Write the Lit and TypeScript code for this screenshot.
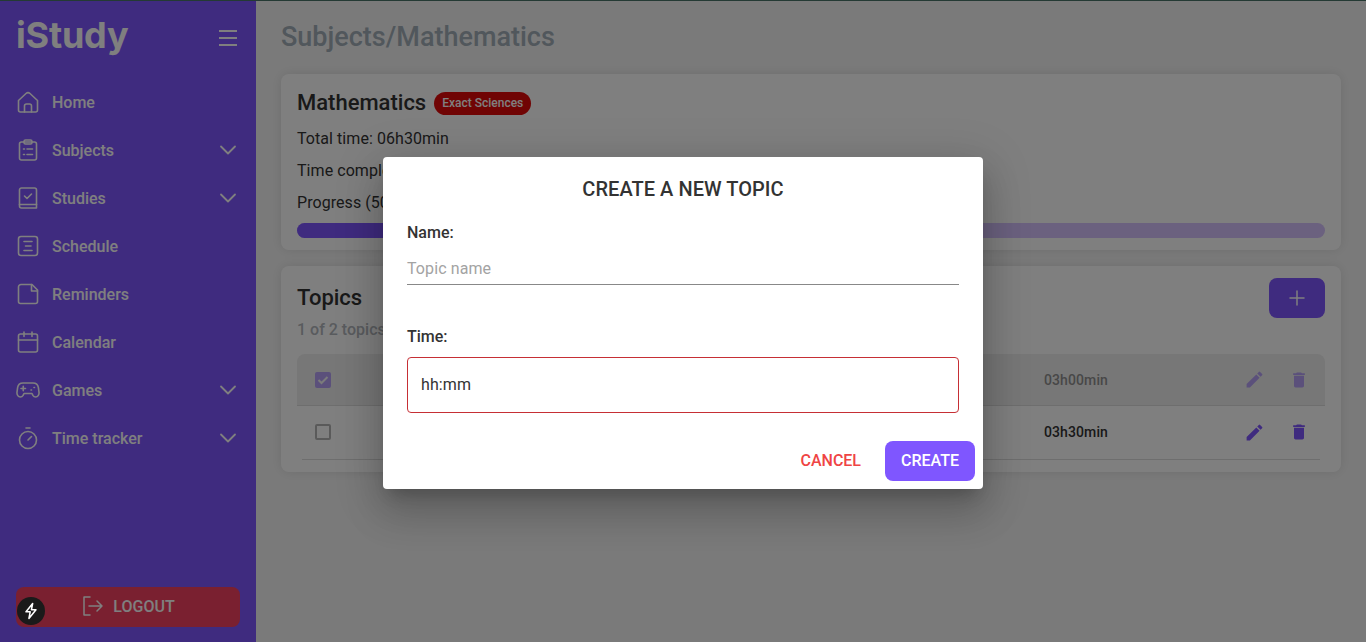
import { LitElement, html, css, svg } from 'lit'
import { customElement } from 'lit/decorators.js'

const icons = {
  home: svg`<path d="M2.500 10.500 10 3.500a3 3 0 0 1 4 0l7.500 7V20a2 2 0 0 1-2 2h-15a2 2 0 0 1-2-2z"/><path d="M8.500 22v-6a2 2 0 0 1 2-2h3a2 2 0 0 1 2 2v6"/>`,
  subjects: svg`<rect x="3.500" y="4" width="17" height="18" rx="2"/><rect x="8" y="2" width="8" height="4" rx="1.500"/><path d="M7.500 11h1M11 11h5.500M7.500 16.500h1M11 16.500h5.500"/>`,
  studies: svg`<path d="M5.500 2h13a2 2 0 0 1 2 2v18h-15a2 2 0 0 1-2-2V4a2 2 0 0 1 2-2z"/><path d="M3.500 18.500h17"/><path d="m8.500 10 2.500 2.500L15.500 8"/>`,
  schedule: svg`<rect x="2.500" y="2.500" width="19" height="19" rx="2.500"/><path d="M8 7.500h8M9.500 12H15M8 16.500h8"/>`,
  reminders: svg`<path d="M5 2.500h11L21.500 8v11.500a2 2 0 0 1-2 2H4.500a2 2 0 0 1-2-2V5a2.500 2.500 0 0 1 2.500-2.500z"/><path d="M15.500 2.500V9h6"/>`,
  calendar: svg`<rect x="2.500" y="4" width="19" height="18" rx="2"/><path d="M2.500 10h19M8 2v4.500M16 2v4.500"/>`,
  games: svg`<path d="M7 5h10a5.500 5.500 0 0 1 5.400 4.600l.6 4.800c.3 2.400-1.300 4.600-3.300 4.600-1.200 0-2.200-.6-2.800-1.600L16 15.500H8l-.9 1.900C6.500 18.400 5.500 19 4.300 19c-2 0-3.600-2.200-3.300-4.600l.6-4.800A5.500 5.500 0 0 1 7 5z"/><path d="M5 10.500h4.500M7.250 8.250v4.500M15 12h.5M18 9.500h.5"/>`,
  timer: svg`<circle cx="12" cy="14" r="8.500"/><path d="M10 2h4M12 14l3.500-3.500"/>`
}

const nav = [
  { label: 'Home', icon: icons.home },
  { label: 'Subjects', icon: icons.subjects, more: true },
  { label: 'Studies', icon: icons.studies, more: true },
  { label: 'Schedule', icon: icons.schedule },
  { label: 'Reminders', icon: icons.reminders },
  { label: 'Calendar', icon: icons.calendar },
  { label: 'Games', icon: icons.games, more: true },
  { label: 'Time tracker', icon: icons.timer, more: true }
]

const pencil = html`<svg class="act pencil" viewBox="0 0 24 24"><path d="M3 17.250V21h3.750L17.810 9.940l-3.750-3.750zM20.710 7.040a1 1 0 0 0 0-1.410l-2.340-2.340a1 1 0 0 0-1.410 0l-1.830 1.830 3.750 3.750z"/></svg>`
const trash = html`<svg class="act" viewBox="0 0 24 24"><path d="M6 19c0 1.100.9 2 2 2h8c1.100 0 2-.9 2-2V7H6zM19 4h-3.500l-1-1h-5l-1 1H5v2h14z"/></svg>`

@customElement('app-root')
export class AppRoot extends LitElement {
  static styles = [
    css`
      * {box-sizing: border-box}

      :host {
        display: flex;
        height: 642px;
        overflow: hidden;
        position: relative;
        font-family: Roboto, sans-serif;
        font-size: 16px;
        color: #333;
        background: #f5f5f5;
      }

      .sidebar {
        width: 256px;
        flex: none;
        display: flex;
        flex-direction: column;
        padding: 0 16px 15px;
        background: #7f56ff;
        color: #fff;
      }

      .brand {
        height: 78px;
        display: flex;
        align-items: center;
        justify-content: space-between;
        padding-bottom: 8px;
      }

      .logo {
        font-family: Inter, sans-serif;
        font-size: 36px;
        font-weight: 700;
        letter-spacing: -.2px;
        line-height: 1;
      }

      .burger {
        width: 18px;
        margin-right: 3px;
        display: flex;
        flex-direction: column;
        gap: 5.500px;
        margin-top: 6px;
      }

      .burger i {
        height: 1.500px;
        background: #fff;
      }

      .nav {
        flex: 1;
      }

      .item {
        height: 48px;
        display: flex;
        align-items: center;
        gap: 12px;
        font-weight: 500;
      }

      .item svg {
        fill: none;
        stroke: #fff;
        stroke-width: 1.600;
        stroke-linecap: round;
        stroke-linejoin: round;
      }

      .item .icon {
        width: 24px;
        height: 24px;
      }

      .item span {
        flex: 1;
      }

      .item .chev {
        width: 24px;
        height: 24px;
        stroke-width: 1.800;
      }

      .logout {
        height: 40px;
        padding-bottom: 2px;
        border-radius: 8px;
        background: #f54060;
        display: flex;
        align-items: center;
        justify-content: center;
        gap: 8px;
        font-weight: 500;
      }

      .logout svg {
        width: 24px;
        height: 24px;
        fill: none;
        stroke: #fff;
        stroke-width: 1.500;
        stroke-linecap: round;
        stroke-linejoin: round;
      }

      main {
        flex: 1;
        min-width: 0;
        padding: 16px 25px 0;
      }

      h1 {
        margin: 0 0 20px;
        height: 38px;
        line-height: 42px;
        font-size: 27px;
        font-weight: 500;
        color: #a2aeb8;
      }

      .card {
        background: #fff;
        border-radius: 8px;
        box-shadow: 0 0 12px rgba(0, 0, 0, .1);
        padding: 16px;
      }

      .subject {
        height: 176px;
        margin-bottom: 16px;
      }

      .heading {
        display: flex;
        align-items: center;
        gap: 8px;
        height: 26px;
        font-size: 22px;
        font-weight: 500;
      }

      .heading .name {
        position: relative;
        top: -1px;
      }

      .badge {
        height: 23px;
        padding: 0 8px;
        border-radius: 12px;
        background: #e00808;
        color: #fff;
        font-size: 12px;
        font-weight: 500;
        line-height: 23px;
      }

      .subject p {
        margin: 0;
        height: 32px;
        line-height: 32px;
        letter-spacing: .06px;
      }

      .subject .first {
        margin-top: 7px;
      }

      .track {
        height: 15px;
        margin-top: 4px;
        border-radius: 8px;
        background: #d6c2ff;
        overflow: hidden;
      }

      .fill {
        height: 100%;
        background: #7f56ff;
      }

      .topics {
        height: 206px;
        padding-top: 12px;
      }

      .topics-head {
        display: flex;
        justify-content: space-between;
        height: 76px;
      }

      h2 {
        margin: 7px 0 0;
        font-size: 22px;
        line-height: 26px;
        font-weight: 500;
      }

      .count {
        margin-top: 9px;
        color: #b3b7bd;
        font-weight: 500;
      }

      .add {
        width: 56px;
        height: 40px;
        border-radius: 8px;
        background: #7f56ff;
        display: flex;
        align-items: center;
        justify-content: center;
      }

      .add svg {
        width: 24px;
        height: 24px;
        fill: none;
        stroke: #fff;
        stroke-width: 1.500;
        stroke-linecap: round;
      }

      .row {
        height: 52px;
        display: flex;
        align-items: center;
        padding: 0 16px 0 18px;
        font-size: 14px;
        font-weight: 500;
        letter-spacing: .1px;
        border-bottom: 1px solid #ddd;
      }

      .row.done {
        background: #eee;
        border-radius: 8px 8px 0 0;
      }

      .row.done > * {
        opacity: .5;
      }

      .row.last {
        height: 54px;
        margin: 0 5px;
        padding: 0 11px 1px 13px;
      }

      .check {
        width: 16px;
        height: 16px;
        border: 2px solid #b5b5b5;
        border-radius: 2px;
      }

      .done .check {
        border: none;
        background: #7f56ff;
        display: flex;
      }

      .check svg {
        fill: none;
        stroke: #fff;
        stroke-width: 2;
      }

      .time {
        margin-left: auto;
        width: 200px;
      }

      .act {
        width: 20px;
        height: 20px;
        fill: #7f56ff;
      }

      .pencil {
        width: 21px;
        height: 21px;
        margin-right: 24px;
      }

      .overlay {
        position: absolute;
        inset: 0;
        padding-top: 4px;
        background: rgba(0, 0, 0, .5);
        display: flex;
        align-items: center;
        justify-content: center;
      }

      .modal {
        width: 600px;
        height: 332px;
        background: #fff;
        border-radius: 4px;
        box-shadow: 0 11px 15px -7px rgba(0, 0, 0, .2), 0 24px 38px 3px rgba(0, 0, 0, .14), 0 9px 46px 8px rgba(0, 0, 0, .12);
        padding: 20px 8px 8px 24px;
        display: flex;
        flex-direction: column;
      }

      .modal h3 {
        margin: 0 16px 0 0;
        font-size: 20px;
        line-height: 24px;
        font-weight: 500;
        letter-spacing: .05px;
        text-align: center;
      }

      label {
        display: block;
        font-weight: 500;
        line-height: 20px;
        margin-right: 16px;
      }

      .name-label {
        margin-top: 22px;
      }

      .line {
        height: 33px;
        margin-top: 9px;
        margin-right: 16px;
        line-height: 34px;
        letter-spacing: .1px;
        color: #a3a3a3;
        border-bottom: 1px solid #888;
      }

      .time-label {
        margin-top: 42px;
      }

      .box {
        height: 56px;
        margin: 10px 16px 0 0;
        padding: 0 13px 2px;
        border: 1px solid #c62f35;
        border-radius: 4px;
        letter-spacing: .1px;
        display: flex;
        align-items: center;
      }

      .actions {
        margin-top: auto;
        display: flex;
        justify-content: flex-end;
        align-items: center;
        gap: 24px;
        font-weight: 500;
      }

      .cancel {
        color: #ef4444;
        position: relative;
        top: -1px;
      }

      .create {
        width: 90px;
        height: 40px;
        line-height: 40px;
        text-align: center;
        border-radius: 8px;
        background: #7f56ff;
        color: #fff;
      }

      .topline {
        position: absolute;
        top: 0;
        left: 0;
        right: 0;
        height: 1px;
        background: #243a34;
      }

      .bolt {
        position: absolute;
        left: 17px;
        top: 597px;
        width: 28px;
        height: 28px;
        border-radius: 50%;
        background: #1a1a1a;
        display: flex;
        align-items: center;
        justify-content: center;
      }

      .bolt svg {
        width: 20px;
        height: 20px;
        fill: none;
        stroke: #fff;
        stroke-width: 1.800;
        stroke-linejoin: round;
      }
    `
  ]

  render () {
    return html`
      <aside class="sidebar">
        <div class="brand">
          <div class="logo">iStudy</div>
          <div class="burger"><i></i><i></i><i></i></div>
        </div>
        <div class="nav">
          ${nav.map(item => html`
            <div class="item">
              <svg class="icon" viewBox="0 0 24 24">${item.icon}</svg>
              <span>${item.label}</span>
              ${item.more ? html`<svg class="chev" viewBox="0 0 24 24"><path d="m5 8.500 7 7 7-7"/></svg>` : ''}
            </div>
          `)}
        </div>
        <div class="logout">
          <svg viewBox="0 0 24 24"><path d="M9 3H3v18h6M8 12h13M16 7l5 5-5 5"/></svg>
          LOGOUT
        </div>
      </aside>
      <main>
        <h1>Subjects/Mathematics</h1>
        <section class="card subject">
          <div class="heading"><span class="name">Mathematics</span> <span class="badge">Exact Sciences</span></div>
          <p class="first">Total time: 06h30min</p>
          <p>Time completed: 03h00min</p>
          <p>Progress (50%)</p>
          <div class="track"><div class="fill" style="width: 50%"></div></div>
        </section>
        <section class="card topics">
          <div class="topics-head">
            <div>
              <h2>Topics</h2>
              <div class="count">1 of 2 topics</div>
            </div>
            <div class="add"><svg viewBox="0 0 24 24"><path d="M12 5v14M5 12h14"/></svg></div>
          </div>
          <div class="row done">
            <div class="check"><svg viewBox="0 0 16 16"><path d="m3.500 8 3 3 6-6"/></svg></div>
            <div class="time">03h00min</div>
            ${pencil}${trash}
          </div>
          <div class="row last">
            <div class="check"></div>
            <div class="time">03h30min</div>
            ${pencil}${trash}
          </div>
        </section>
      </main>
      <div class="overlay">
        <div class="modal">
          <h3>CREATE A NEW TOPIC</h3>
          <label class="name-label">Name:</label>
          <div class="line">Topic name</div>
          <label class="time-label">Time:</label>
          <div class="box">hh:mm</div>
          <div class="actions">
            <span class="cancel">CANCEL</span>
            <span class="create">CREATE</span>
          </div>
        </div>
      </div>
      <div class="topline"></div>
      <div class="bolt"><svg viewBox="0 0 24 24"><path d="M14 3 6 13h5l-1.500 8L18 10.500h-5.500L14 3z"/></svg></div>
    `
  }
}
